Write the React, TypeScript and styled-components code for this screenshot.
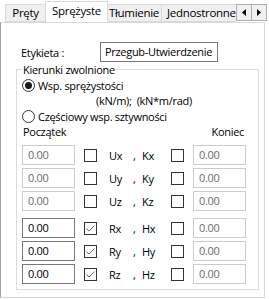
import React from "react";
import styled, { createGlobalStyle } from "styled-components";

const GlobalStyle = createGlobalStyle`
  html, body {
    margin: 0;
    padding: 0;
    background: #ffffff;
  }

  body {
    font-family: "Open Sans", "Noto Sans", sans-serif;
    font-size: 11px;
    letter-spacing: -0.3px;
    color: #000000;
  }
`;

type Dof = {
  axis: string;
  dof: string;
  startOn: boolean;
  endOn: boolean;
};

const translations: Dof[] = [
  { axis: "Ux", dof: "Kx", startOn: false, endOn: false },
  { axis: "Uy", dof: "Ky", startOn: false, endOn: false },
  { axis: "Uz", dof: "Kz", startOn: false, endOn: false },
];

const rotations: Dof[] = [
  { axis: "Rx", dof: "Hx", startOn: true, endOn: false },
  { axis: "Ry", dof: "Hy", startOn: true, endOn: false },
  { axis: "Rz", dof: "Hz", startOn: true, endOn: false },
];

const tabs = [
  { title: "Pręty", width: 41 },
  { title: "Sprężyste", width: 63, active: true },
  { title: "Tłumienie", width: 55 },
  { title: "Jednostronne", width: 80 },
];

const Check: React.FC<{ checked?: boolean }> = ({ checked }) => (
  <CheckBox>
    {checked && (
      <svg width="11" height="11" viewBox="0 0 11 11">
        <path d="M1.5 5.5 L4 8 L9.5 2.5" fill="none" stroke="#6d6d6d" strokeWidth="1" />
      </svg>
    )}
  </CheckBox>
);

const Radio: React.FC<{ checked?: boolean; label: string }> = ({ checked, label }) => (
  <RadioRow>
    <RadioCircle>{checked && <RadioDot />}</RadioCircle>
    {label}
  </RadioRow>
);

const DofRow: React.FC<{ row: Dof }> = ({ row }) => (
  <Row>
    <Field $enabled={row.startOn}>0.00</Field>
    <Check checked={row.startOn} />
    <AxisName>{row.axis}</AxisName>
    <Comma>,</Comma>
    <DofName>{row.dof}</DofName>
    <Check checked={row.endOn} />
    <Field $enabled={row.endOn} $end>
      0.00
    </Field>
  </Row>
);

const App: React.FC = () => {
  return (
    <>
      <GlobalStyle />
      <Window>
        <TabStrip>
          <TabList>
            {tabs.map((t) => (
              <Tab key={t.title} $active={t.active} $width={t.width}>
                {t.title}
              </Tab>
            ))}
          </TabList>
          <Scroller>
            <ScrollButton>
              <svg width="4" height="7" viewBox="0 0 4 7">
                <path d="M4 0 L0 3.5 L4 7 Z" fill="#000" />
              </svg>
            </ScrollButton>
            <ScrollButton>
              <svg width="4" height="7" viewBox="0 0 4 7">
                <path d="M0 0 L4 3.5 L0 7 Z" fill="#000" />
              </svg>
            </ScrollButton>
          </Scroller>
        </TabStrip>
        <Panel>
          <LabelRow>
            <LabelText>Etykieta :</LabelText>
            <NameInput>Przegub-Utwierdzenie</NameInput>
          </LabelRow>
          <Group>
            <Legend>Kierunki zwolnione</Legend>
            <Radio checked label="Wsp. sprężystości" />
            <Units>(kN/m);&nbsp;&nbsp;(kN*m/rad)</Units>
            <Radio label="Częściowy wsp. sztywności" />
            <Header>
              <span>Początek</span>
              <span>Koniec</span>
            </Header>
            <RowGroup>
              {translations.map((r) => (
                <DofRow key={r.axis} row={r} />
              ))}
            </RowGroup>
            <RowGroup>
              {rotations.map((r) => (
                <DofRow key={r.axis} row={r} />
              ))}
            </RowGroup>
          </Group>
        </Panel>
      </Window>
    </>
  );
};

const Window = styled.div`
  width: 269px;
  height: 299px;
  display: flex;
  flex-direction: column;
  background: #ffffff;
  overflow: hidden;
`;

const TabStrip = styled.div`
  height: 22px;
  display: flex;
  position: relative;
  z-index: 1;
`;

const TabList = styled.div`
  width: 236px;
  padding-left: 5px;
  display: flex;
  align-items: flex-end;
  overflow: hidden;
  box-sizing: border-box;
`;

const Tab = styled.div<{ $active?: boolean; $width: number }>`
  flex: none;
  width: ${(p) => p.$width}px;
  box-sizing: border-box;
  height: ${(p) => (p.$active ? "22px" : "18px")};
  margin-bottom: ${(p) => (p.$active ? "-1px" : "0")};
  margin-left: ${(p) => (p.$active ? "-1px" : "0")};
  margin-right: ${(p) => (p.$active ? "-1px" : "0")};
  padding-bottom: ${(p) => (p.$active ? "3px" : "0")};
  text-align: center;
  font-size: 11.5px;
  letter-spacing: -0.3px;
  line-height: ${(p) => (p.$active ? "17px" : "16px")};
  background: ${(p) => (p.$active ? "#ffffff" : "#f0f0f0")};
  border: 1px solid #d9d9d9;
  border-bottom: ${(p) => (p.$active ? "none" : "1px solid #d9d9d9")};
  border-left-width: ${(p) => (p.$active ? "1px" : "0")};
  position: relative;
  z-index: ${(p) => (p.$active ? 2 : 1)};
  white-space: nowrap;

  &:first-child {
    border-left-width: 1px;
  }

  &:last-child {
    text-align: left;
    padding-left: 5px;
  }
`;

const Scroller = styled.div`
  display: flex;
  margin-top: 4px;
`;

const ScrollButton = styled.div`
  width: 16px;
  height: 17px;
  box-sizing: border-box;
  display: flex;
  align-items: center;
  justify-content: center;
  background: #f0f0f0;
  border: 1px solid #adadad;

  & + & {
    border-left: none;
    width: 15px;
  }
`;

const Panel = styled.div`
  width: 265px;
  height: 276px;
  box-sizing: border-box;
  border: 1px solid #d9d9d9;
  border-left-color: #a0a0a0;
  background: #ffffff;
  padding: 19px 5px 0 15px;
`;

const LabelRow = styled.div`
  display: flex;
  align-items: center;
  height: 20px;
`;

const LabelText = styled.span`
  width: 84px;
  padding-left: 5px;
  box-sizing: border-box;
`;

const NameInput = styled.div`
  width: 118px;
  height: 20px;
  box-sizing: border-box;
  border: 1px solid #7a7a7a;
  padding-left: 4px;
  line-height: 18px;
  white-space: nowrap;
  overflow: hidden;
`;

const Group = styled.fieldset`
  margin: 0;
  padding: 0 12px 5px 5px;
  border: 1px solid #dcdcdc;
  min-inline-size: 0;
`;

const Legend = styled.legend`
  padding: 0 1px;
  line-height: 15px;
`;

const RadioRow = styled.div`
  display: flex;
  align-items: center;
  gap: 3px;
  height: 15px;
  margin-top: 1px;
  line-height: 15px;

  & + & {
    margin-top: 0;
  }
`;

const RadioCircle = styled.span`
  width: 13px;
  height: 13px;
  box-sizing: border-box;
  border: 1px solid #333333;
  border-radius: 50%;
  display: flex;
  align-items: center;
  justify-content: center;
`;

const RadioDot = styled.span`
  width: 7px;
  height: 7px;
  border-radius: 50%;
  background: #1a1a1a;
`;

const Units = styled.div`
  height: 15px;
  line-height: 15px;
  padding-left: 74px;
`;

const Header = styled.div`
  display: flex;
  justify-content: space-between;
  height: 15px;
  line-height: 15px;
  padding: 0 2px 0 1px;
  margin-bottom: 6px;
`;

const RowGroup = styled.div`
  display: flex;
  flex-direction: column;
  gap: 3px;

  & + & {
    margin-top: 7px;
  }
`;

const Row = styled.div`
  display: flex;
  align-items: center;
  height: 20px;
  line-height: 15px;
`;

const Field = styled.div<{ $enabled?: boolean; $end?: boolean }>`
  width: 53px;
  height: 20px;
  box-sizing: border-box;
  border: 1px solid ${(p) => (p.$enabled ? "#7a7a7a" : "#cccccc")};
  color: ${(p) => (p.$enabled ? "#000000" : "#6d6d6d")};
  padding-left: 5px;
  line-height: 18px;
  margin-left: ${(p) => (p.$end ? "9px" : "0")};
`;

const CheckBox = styled.span`
  width: 13px;
  height: 13px;
  box-sizing: border-box;
  border: 1px solid #333333;
  background: #ffffff;
  display: flex;
  align-items: center;
  justify-content: center;

  ${Field} + & {
    margin-left: 9px;
  }
`;

const AxisName = styled.span`
  width: 24px;
  margin-left: 12px;
`;

const Comma = styled.span`
  width: 9px;
`;

const DofName = styled.span`
  width: 29px;
`;

export default App;
